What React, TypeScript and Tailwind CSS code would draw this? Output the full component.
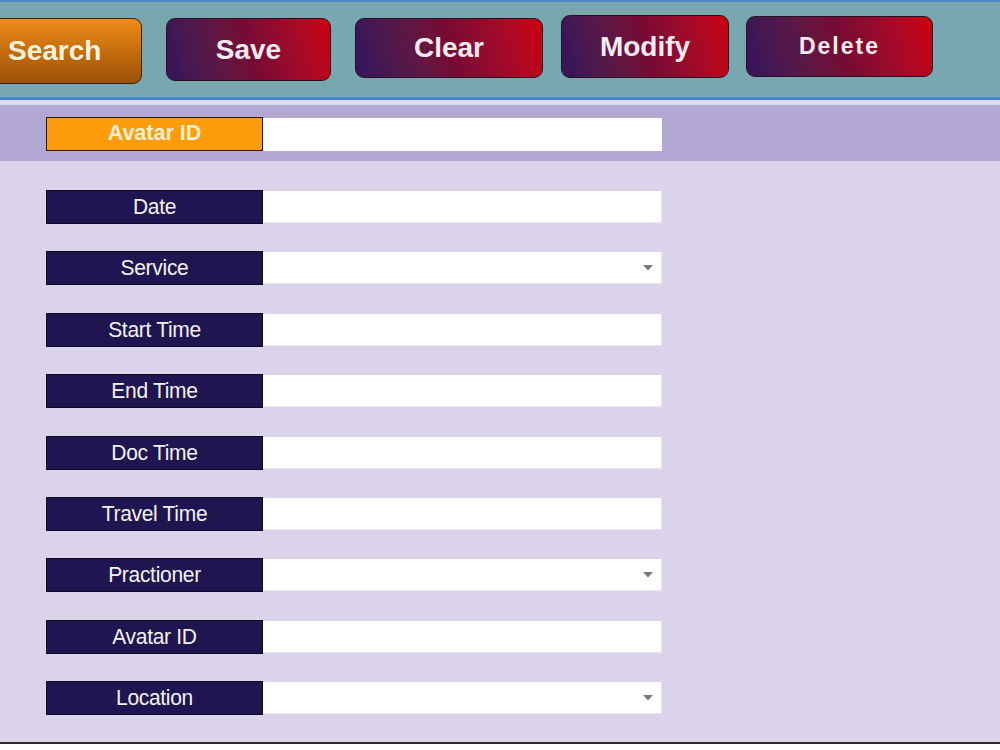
import React from "react";

const rows: { label: string; select?: boolean }[] = [
  { label: "Date" },
  { label: "Service", select: true },
  { label: "Start Time" },
  { label: "End Time" },
  { label: "Doc Time" },
  { label: "Travel Time" },
  { label: "Practioner", select: true },
  { label: "Avatar ID" },
  { label: "Location", select: true },
];

function Arrow() {
  return (
    <svg width="10" height="6" viewBox="0 0 10 6" className="mr-[8px]">
      <path d="M0 0 L10 0 L5 5.5 Z" fill="#7a7a7a" />
    </svg>
  );
}

function Row({ label, select }: { label: string; select?: boolean }) {
  return (
    <div className="flex items-center h-[34px] ml-[46px]">
      <div className="w-[217px] h-[34px] bg-[#1f1550] border border-[#0d0a20] flex items-center justify-center pb-[3px]">
        <span className="inline-block scale-y-[1.08] text-[#f4f2f8] text-[21px] leading-none tracking-[-0.3px]">{label}</span>
      </div>
      <div className="w-[399px] h-[32px] bg-white border-r border-b border-[#e6e3ee] flex items-center justify-end">
        {select && <Arrow />}
      </div>
    </div>
  );
}

export default function App() {
  const red =
    "bg-linear-75 from-[#3a1558] from-5% via-[#760a34] via-50% to-[#cc0008] border border-[#2a1020] rounded-[9px] flex items-center justify-center text-[#f8ecf2] font-bold";
  return (
    <div
      className="w-[1000px] h-[750px] bg-white flex flex-col overflow-hidden"
      style={{ fontFamily: '"Liberation Sans", Arial, sans-serif' }}
    >
      <header className="h-[100px] shrink-0 bg-[#79a7b0] border-t-2 border-b-[3px] border-[#4a86c8] flex items-start">
        <button className="ml-[-10px] mt-[16px] w-[152px] h-[66px] rounded-[9px] border border-[#3a2010] bg-linear-to-b from-[#f08c16] to-[#9c5006] flex items-center justify-start pl-[17px] text-[#fbf2dc] font-bold text-[28px]">
          Search
        </button>
        <button className={`${red} ml-[24px] mt-[16px] w-[165px] h-[63px] text-[28px]`}>Save</button>
        <button className={`${red} ml-[24px] mt-[16px] w-[188px] h-[60px] text-[28px]`}>Clear</button>
        <button className={`${red} ml-[18px] mt-[13px] w-[168px] h-[63px] text-[28px]`}>Modify</button>
        <button className={`${red} ml-[17px] mt-[14px] w-[187px] h-[61px] text-[23px] tracking-[2px]`}>Delete</button>
      </header>
      <div className="h-[5px] shrink-0 bg-[#d8def0]" />
      <div className="h-[56px] shrink-0 bg-[#b3a8d4] flex items-start pt-[12px]">
        <div className="flex items-center h-[34px] ml-[46px]">
          <div className="w-[217px] h-[34px] bg-[#ff9c0c] border border-[#2a1a08] flex items-center justify-center">
            <span className="text-[#fbf0d6] font-bold text-[21.5px] leading-none">Avatar ID</span>
          </div>
          <div className="w-[399px] h-[33px] bg-white" />
        </div>
      </div>
      <main className="flex-1 bg-[#dad3e9] flex flex-col gap-[27.4px] pt-[29px] border-b-2 border-[#2a2a2e]">
        {rows.map((r, i) => (
          <Row key={i} label={r.label} select={r.select} />
        ))}
      </main>
      <div className="h-[6px] shrink-0 bg-white" />
    </div>
  );
}
